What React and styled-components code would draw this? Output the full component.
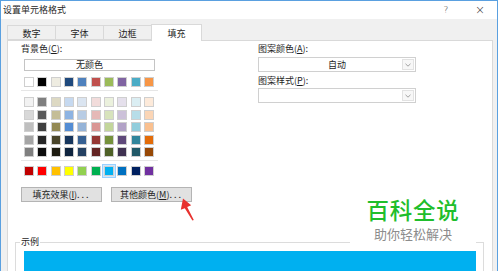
import React from 'react'
import styled, { createGlobalStyle } from 'styled-components'

const GlobalStyle = createGlobalStyle`
  html, body { margin: 0; padding: 0; background: #fff; }
  body {
    width: 500px;
    height: 271px;
    overflow: hidden;
    font-family: "Noto Sans CJK SC", "Noto Sans", sans-serif;
    color: #1e1e1e;
  }
  * { box-sizing: border-box; }
`;

const Window = styled.div`
  position: relative;
  width: 498px;
  height: 271px;
  border: 1px solid #5aa0e0;
  border-bottom: none;
  background: #f0f0f0;
  display: flex;
  flex-direction: column;
  overflow: hidden;
`;

const TitleBar = styled.div`
  height: 18px;
  flex: none;
  background: #fff;
  display: flex;
  align-items: center;
  padding-left: 2px;
  font-size: 9px;
`;

const Title = styled.span`
  flex: 1;
  line-height: 18px;
`;

const TitleButton = styled.span`
  width: 34px;
  height: 18px;
  display: flex;
  align-items: center;
  justify-content: center;
  font-size: ${p => p.$big ? '12px' : '9px'};
  color: #333;
  font-family: "DejaVu Sans", sans-serif;
  font-weight: 300;
`;

const TabStrip = styled.div`
  flex: none;
  display: flex;
  align-items: flex-end;
  height: 16px;
  margin-top: 5px;
  padding-left: 6px;
  position: relative;
  z-index: 1;
`;

const Tab = styled.div`
  width: ${p => p.$active ? 51 : 49}px;
  height: ${p => p.$active ? 17 : 15}px;
  margin-right: -1px;
  margin-bottom: ${p => p.$active ? -1 : 0}px;
  border: 1px solid #d9d9d9;
  border-bottom: ${p => p.$active ? 'none' : '1px solid #d9d9d9'};
  background: ${p => p.$active ? '#fff' : '#f0f0f0'};
  display: flex;
  align-items: center;
  justify-content: center;
  font-size: 9px;
  padding-top: ${p => p.$active ? 0 : 1}px;
`;

const Panel = styled.div`
  flex: 1;
  margin: 0 4px 0 6px;
  background: #fff;
  border: 1px solid #d9d9d9;
  border-bottom: none;
  padding-left: 7px;
`;

const TopSection = styled.div`
  display: grid;
  grid-template-columns: 137px 158px;
  column-gap: 100px;
  padding: 2px 0 0 6px;
`;

const Column = styled.div`
  display: flex;
  flex-direction: column;
`;

const Label = styled.div`
  font-size: 9px;
  line-height: 12px;
  height: 12px;
  margin-top: ${p => p.$top || 0}px;
  white-space: nowrap;
`;

const NoColor = styled.div`
  margin: 4px 0 0 3px;
  width: 131px;
  height: 12px;
  border: 1px solid #c4c4c4;
  font-size: 9px;
  line-height: 10px;
  text-align: center;
`;

const SwatchGrid = styled.div`
  display: grid;
  grid-template-columns: repeat(10, 10px);
  grid-auto-rows: 10px;
  column-gap: 3.33px;
  row-gap: 2.5px;
  margin: ${p => p.$top}px 0 0 3px;
`;

const Swatch = styled.div`
  width: 10px;
  height: 10px;
  border: 1px solid #cfcfcf;
  background: ${p => p.$c};
  box-shadow: ${p => p.$selected ? '0 0 0 1px #cce8ff, 0 0 0 2px #99d1ff' : 'none'};
`;

const Separator = styled.div`
  height: 1px;
  background: #e6e6e6;
  margin-top: ${p => p.$top}px;
`;

const ButtonRow = styled.div`
  display: flex;
  gap: 9px;
  margin: 11px 0 0 6px;
`;

const Button = styled.div`
  width: 81px;
  height: 15px;
  background: #e1e1e1;
  border: 1px solid #b4b4b4;
  font-size: 9px;
  line-height: 13px;
  text-align: center;
  white-space: nowrap;
`;

const Dots = styled.span`
  letter-spacing: 2px;
`;

const Select = styled.div`
  margin-top: ${p => p.$top}px;
  width: 158px;
  height: 15px;
  border: 1px solid #d0d0d0;
  display: flex;
  background: #fff;
`;

const SelectValue = styled.div`
  flex: 1;
  font-size: 9px;
  line-height: 13px;
  text-align: center;
  padding-left: 14px;
`;

const SelectArrow = styled.div`
  width: 12px;
  margin: 1px;
  border: 1px solid #e2e2e2;
  background: #f7f7f7;
  display: flex;
  align-items: center;
  justify-content: center;
`;

const Group = styled.fieldset`
  margin: 34px 0 0 0;
  width: 469px;
  border: 1px solid #dcdcdc;
  border-bottom: none;
  padding: 0 7px 0 4px;
  min-width: 0;
`;

const Legend = styled.legend`
  padding: 0 1px;
  font-size: 9px;
  line-height: 12px;
`;

const Preview = styled.div`
  margin: 3px 0 0 4px;
  height: 40px;
  background: #00b0f0;
`;

const Watermark = styled.div`
  position: absolute;
  left: 349px;
  top: 196px;
  width: 126px;
  height: 52px;
  background: #fff;
  display: flex;
  flex-direction: column;
  align-items: center;
`;

const MarkTitle = styled.div`
  font-size: 22.5px;
  line-height: 25px;
  font-weight: 500;
  color: #1fbe2c;
  letter-spacing: 0.8px;
`;

const MarkSub = styled.div`
  margin-top: 5px;
  font-size: 13px;
  line-height: 14px;
  color: #8c8c8c;
`;

const Arrow = styled.svg`
  position: absolute;
  left: 175px;
  top: 192px;
`;

const theme = ['#FFFFFF', '#000000', '#EEECE1', '#1F497D', '#4F81BD', '#C0504D', '#9BBB59', '#8064A2', '#4BACC6', '#F79646'];
const tints = [
  ['#F2F2F2', '#7F7F7F', '#DDD9C3', '#C6D9F0', '#DBE5F1', '#F2DCDB', '#EBF1DD', '#E5E0EC', '#DBEEF3', '#FDEADA'],
  ['#D8D8D8', '#595959', '#C4BD97', '#8DB3E2', '#B8CCE4', '#E5B9B7', '#D7E3BC', '#CCC1D9', '#B7DDE8', '#FBD5B5'],
  ['#BFBFBF', '#3F3F3F', '#938953', '#548DD4', '#95B3D7', '#D99694', '#C3D69B', '#B2A2C7', '#92CDDC', '#FAC08F'],
  ['#A5A5A5', '#262626', '#494429', '#17365D', '#366092', '#953734', '#76923C', '#5F497A', '#31859B', '#E36C09'],
  ['#7F7F7F', '#0C0C0C', '#1D1B10', '#0F243E', '#244061', '#632423', '#4F6128', '#3F3151', '#205867', '#974806'],
];
const standard = ['#C00000', '#FF0000', '#FFC000', '#FFFF00', '#92D050', '#00B050', '#00B0F0', '#0070C0', '#002060', '#7030A0'];

const Chevron = () => (
  <svg width="6" height="4" viewBox="0 0 6 4">
    <path d="M0.5 0.8 L3 3.2 L5.5 0.8" fill="none" stroke="#8a8a8a" strokeWidth="0.8" />
  </svg>
);

const App = () => {
  const tabs = ['数字', '字体', '边框', '填充'];

  return (
    <>
      <GlobalStyle />
      <Window>
        <TitleBar>
          <Title>设置单元格格式</Title>
          <TitleButton>?</TitleButton>
          <TitleButton $big>×</TitleButton>
        </TitleBar>

        <TabStrip>
          {tabs.map((t, i) => (
            <Tab key={t} $active={i === 3}>{t}</Tab>
          ))}
        </TabStrip>

        <Panel>
          <TopSection>
            <Column>
              <Label>背景色(<u>C</u>):</Label>
              <NoColor>无颜色</NoColor>
              <SwatchGrid $top={6}>
                {theme.map((c, i) => <Swatch key={i} $c={c} />)}
              </SwatchGrid>
              <Separator $top={3} />
              <SwatchGrid $top={6}>
                {tints.flat().map((c, i) => <Swatch key={i} $c={c} />)}
              </SwatchGrid>
              <Separator $top={3} />
              <SwatchGrid $top={5}>
                {standard.map((c, i) => <Swatch key={i} $c={c} $selected={i === 6} />)}
              </SwatchGrid>
            </Column>

            <Column>
              <Label>图案颜色(<u>A</u>):</Label>
              <Select $top={2}>
                <SelectValue>自动</SelectValue>
                <SelectArrow><Chevron /></SelectArrow>
              </Select>
              <Label $top={3}>图案样式(<u>P</u>):</Label>
              <Select $top={1}>
                <SelectValue />
                <SelectArrow><Chevron /></SelectArrow>
              </Select>
            </Column>
          </TopSection>

          <ButtonRow>
            <Button>填充效果(<u>I</u>)<Dots>...</Dots></Button>
            <Button>其他颜色(<u>M</u>)<Dots>...</Dots></Button>
          </ButtonRow>

          <Group>
            <Legend>示例</Legend>
            <Preview />
          </Group>
        </Panel>

        {/* annotation arrow */}
        <Arrow width="24" height="32" viewBox="0 0 24 32">
          <polygon points="7,5.5 15.2,12.2 11.2,14 17.8,27 16.4,27.6 8.8,15.2 4.8,16.8" fill="#e8322f" />
        </Arrow>

        <Watermark>
          <MarkTitle>百科全说</MarkTitle>
          <MarkSub>助你轻松解决</MarkSub>
        </Watermark>
      </Window>
    </>
  )
}

export default App
